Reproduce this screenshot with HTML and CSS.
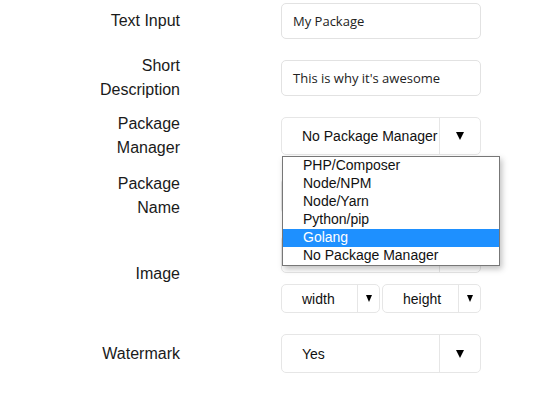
FILE: index.html
```html
<!DOCTYPE html>
<html>
<head>
<meta charset="utf-8">
<link rel="stylesheet" href="styles.css">
</head>
<body>
<form class="form">
  <div class="row row-1">
    <label class="label">Text Input</label>
    <div class="control"><div class="input">My Package</div></div>
  </div>
  <div class="row row-2">
    <label class="label">Short Description</label>
    <div class="control"><div class="input">This is why it's awesome</div></div>
  </div>
  <div class="row row-3">
    <label class="label">Package Manager</label>
    <div class="control">
      <div class="select"><span class="value">No Package Manager</span><span class="arrow"><i class="tri"></i></span></div>
      <ul class="menu">
        <li>PHP/Composer</li>
        <li>Node/NPM</li>
        <li>Node/Yarn</li>
        <li>Python/pip</li>
        <li class="active">Golang</li>
        <li>No Package Manager</li>
      </ul>
    </div>
  </div>
  <div class="row row-4">
    <label class="label">Package Name</label>
    <div class="control"><div class="input"></div></div>
  </div>
  <div class="row row-5">
    <label class="label">Image</label>
    <div class="control stack">
      <div class="select"><span class="value"></span><span class="arrow"><i class="tri"></i></span></div>
      <div class="pair">
        <div class="select small w1"><span class="value">width</span><span class="arrow"><i class="tri sm"></i></span></div>
        <div class="select small w2"><span class="value">height</span><span class="arrow"><i class="tri sm"></i></span></div>
      </div>
    </div>
  </div>
  <div class="row row-6">
    <label class="label">Watermark</label>
    <div class="control"><div class="select tall"><span class="value">Yes</span><span class="arrow"><i class="tri"></i></span></div></div>
  </div>
</form>
</body>
</html>
```
FILE: styles.css
```css
html, body {
  margin: 0;
  padding: 0;
  background: #fff;
}
.form {
  font-family: "Liberation Sans", Arial, sans-serif;
  color: #1a1a1a;
}
.row {
  display: flex;
  align-items: center;
}
.label {
  width: 100px;
  margin-left: 80px;
  text-align: right;
  font-size: 16px;
  line-height: 24px;
}
.control {
  margin-left: 101px;
  width: 200px;
  position: relative;
}
.row-1 { height: 42px; }
.row-2 { height: 48px; margin-top: 12px; }
.row-3 { height: 48px; margin-top: 10px; }
.row-4 { height: 48px; margin-top: 12px; }
.row-5 { margin-top: 15px; }
.row-6 { margin-top: 21px; }

.input {
  box-sizing: border-box;
  height: 36px;
  border: 1px solid #e2e2e2;
  border-radius: 5px;
  padding: 0 11px;
  display: flex;
  align-items: center;
  font-family: "Open Sans", "Noto Sans", sans-serif;
  font-size: 13px;
  color: #222;
}
.select {
  box-sizing: border-box;
  height: 38px;
  border: 1px solid #e6e6e6;
  border-radius: 5px;
  display: flex;
  font-size: 14px;
  color: #111;
}
.select.tall { height: 39px; }
.select .value {
  flex: 1;
  display: flex;
  align-items: center;
  padding-left: 20px;
}
.select .arrow {
  width: 40px;
  border-left: 1px solid #e6e6e6;
  display: flex;
  align-items: center;
  justify-content: center;
}
.tri {
  width: 0;
  height: 0;
  border-left: 4px solid transparent;
  border-right: 4px solid transparent;
  border-top: 8px solid #000;
}
.tri.sm {
  border-left-width: 3.5px;
  border-right-width: 3.5px;
  border-top-width: 7px;
}
.stack {
  display: flex;
  flex-direction: column;
  gap: 11px;
}
.pair {
  display: flex;
  gap: 2px;
}
.select.small {
  height: 29px;
}
.select.small .arrow { width: 21px; }
.w1 { width: 99px; }
.w2 { width: 99px; }

.menu {
  position: absolute;
  left: 1px;
  top: 39px;
  width: 218px;
  box-sizing: border-box;
  margin: 0;
  padding: 0;
  list-style: none;
  background: #fff;
  border: 1px solid #777;
  box-shadow: 2px 3px 6px rgba(0, 0, 0, 0.25);
  z-index: 5;
  font-size: 14px;
  color: #111;
}
.menu li {
  height: 18px;
  line-height: 17px;
  padding-left: 20px;
}
.menu li.active {
  background: #1e90ff;
  color: #fff;
}
```
